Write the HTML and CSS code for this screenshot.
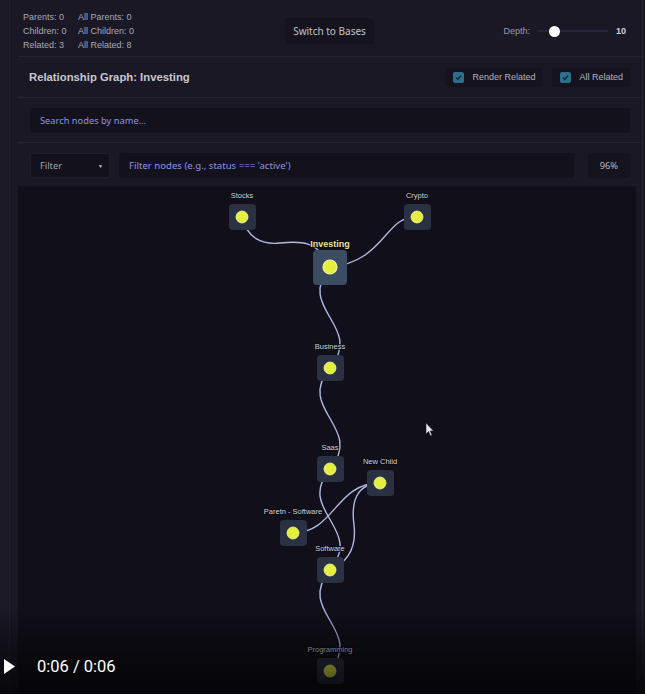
FILE: index.html
```html
<!DOCTYPE html>
<html>
<head>
<meta charset="utf-8">
<link rel="stylesheet" href="styles.css">
</head>
<body>
<div class="app">
  <div class="sidebar"></div>
  <div class="content">
    <div class="topbar">
      <div class="stats">
        <span>Parents: 0</span><span>All Parents: 0</span>
        <span>Children: 0</span><span>All Children: 0</span>
        <span>Related: 3</span><span>All Related: 8</span>
      </div>
      <button class="btn">Switch to Bases</button>
      <div class="depth">
        <span class="depth-label">Depth:</span>
        <div class="slider"><div class="thumb"></div></div>
        <span class="depth-val">10</span>
      </div>
    </div>
    <div class="header">
      <div class="title">Relationship Graph: Investing</div>
      <div class="checks">
        <label class="check"><span class="box"><svg width="11" height="11" viewBox="0 0 11 11"><path d="M3 5.6 L4.8 7.4 L8 3.6" fill="none" stroke="#0f1d26" stroke-width="1.2"/></svg></span>Render Related</label>
        <label class="check"><span class="box"><svg width="11" height="11" viewBox="0 0 11 11"><path d="M3 5.6 L4.8 7.4 L8 3.6" fill="none" stroke="#0f1d26" stroke-width="1.2"/></svg></span>All Related</label>
      </div>
    </div>
    <div class="search-row">
      <div class="input search">Search nodes by name...</div>
    </div>
    <div class="filter-row">
      <div class="select">Filter<span class="caret">▼</span></div>
      <div class="input filter">Filter nodes (e.g., status === 'active')</div>
      <div class="pct">96%</div>
    </div>
    <div class="canvas">
      <svg class="graph" width="618" height="508" viewBox="18 186 618 508">
        <g class="edges" fill="none" stroke="#b0b9e4" stroke-width="1.4">
          <path d="M242,217 C247,238 262,245 280,243 C300,241 318,240 330,267"/>
          <path d="M417,217 C385,215 385,262 330,267"/>
          <path d="M330,267 C295,309 365,326 330,368"/>
          <path d="M330,368 C295,410 365,427 330,469"/>
          <path d="M330,469 C295,511 365,528 330,570"/>
          <path d="M330,570 C295,612 365,629 330,671"/>
          <path d="M293,533 C335,533 335,483 380,483"/>
          <path d="M380,483 C356,484 351,502 354,525 C357,550 346,563 330,570"/>
        </g>
        <g class="nodes">
          <rect class="nbox" x="229" y="204" width="27" height="26" rx="4"/>
          <circle class="dot" cx="242" cy="217" r="6"/>
          <text class="lbl" x="242" y="198">Stocks</text>

          <rect class="nbox" x="404" y="204" width="27" height="26" rx="4"/>
          <circle class="dot" cx="417" cy="217" r="6"/>
          <text class="lbl" x="417" y="198">Crypto</text>

          <rect class="nbox main" x="313" y="250" width="34" height="35" rx="4"/>
          <circle class="dot big" cx="330" cy="267" r="7"/>
          <text class="lbl main-lbl" x="330" y="247">Investing</text>

          <rect class="nbox" x="317" y="355" width="27" height="26" rx="4"/>
          <circle class="dot" cx="330" cy="368" r="6"/>
          <text class="lbl" x="330" y="349">Business</text>

          <rect class="nbox" x="317" y="456" width="27" height="26" rx="4"/>
          <circle class="dot" cx="330" cy="469" r="6"/>
          <text class="lbl" x="330" y="450">Saas</text>

          <rect class="nbox" x="367" y="470" width="27" height="26" rx="4"/>
          <circle class="dot" cx="380" cy="483" r="6"/>
          <text class="lbl" x="380" y="464">New Child</text>

          <rect class="nbox" x="280" y="520" width="27" height="26" rx="4"/>
          <circle class="dot" cx="293" cy="533" r="6"/>
          <text class="lbl" x="293" y="514">Paretn - Software</text>

          <rect class="nbox" x="317" y="557" width="27" height="26" rx="4"/>
          <circle class="dot" cx="330" cy="570" r="6"/>
          <text class="lbl" x="330" y="551">Software</text>

          <rect class="nbox" x="317" y="658" width="27" height="26" rx="4"/>
          <circle class="dot" cx="330" cy="671" r="6"/>
          <text class="lbl" x="330" y="652">Programming</text>
        </g>
        <path class="cursor" d="M426,423 L426,434 L428.5,431.5 L430.5,436 L432,435.3 L430.2,431 L433.5,431 Z"/>
      </svg>
    </div>
  </div>
</div>
<div class="video-bar">
  <svg class="play" width="12" height="15" viewBox="0 0 12 15"><path d="M0,0 L11,7.5 L0,15 Z" fill="#fff"/></svg>
  <span class="time">0:06 / 0:06</span>
</div>
</body>
</html>
```
FILE: styles.css
```css
html, body {
  margin: 0;
  padding: 0;
}
body {
  background: #1a1825;
  width: 645px;
  height: 694px;
  overflow: hidden;
  position: relative;
  font-family: "Liberation Sans", Arial, sans-serif;
}
.app {
  display: flex;
  height: 694px;
}
.sidebar {
  width: 9px;
  border-right: 1px solid #23212f;
  background: #1b1926;
  flex: none;
}
.content {
  margin-left: 8px;
  width: 624px;
  border-right: 1px solid #24222f;
  display: flex;
  flex-direction: column;
  flex: none;
}
.topbar {
  height: 50px;
  padding: 6px 16px 0 5px;
  border-bottom: 1px solid #252333;
  display: grid;
  grid-template-columns: 1fr auto 1fr;
  align-items: center;
}
.stats {
  display: grid;
  grid-template-columns: 55px auto;
  font-size: 9px;
  line-height: 14px;
  color: #a9a9b5;
}
.btn {
  background: #15131e;
  border: none;
  border-radius: 3px;
  color: #c2c2cc;
  font-family: "Noto Sans", sans-serif;
  font-size: 10px;
  height: 26px;
  width: 89px;
  padding: 0;
  margin-left: 10px;
}
.depth {
  justify-self: end;
  display: flex;
  align-items: center;
}
.depth-label {
  font-size: 9px;
  color: #9b9ba7;
  margin-right: 8px;
}
.slider {
  width: 70px;
  height: 2px;
  background: #272535;
  position: relative;
  margin-right: 8px;
}
.thumb {
  position: absolute;
  width: 11px;
  height: 11px;
  border-radius: 50%;
  background: #fff;
  left: 11px;
  top: -4.5px;
}
.depth-val {
  font-size: 9px;
  font-weight: bold;
  color: #d2d2da;
}
.header {
  height: 40px;
  border-bottom: 1px solid #252333;
  display: flex;
  align-items: center;
  justify-content: space-between;
  padding: 0 12px 0 11px;
}
.title {
  font-size: 11.3px;
  font-weight: bold;
  color: #c6c6ce;
}
.checks {
  display: flex;
  gap: 10px;
}
.check {
  display: flex;
  align-items: center;
  height: 19px;
  background: #15131e;
  border-radius: 3px;
  padding: 0 7px 0 8px;
  font-size: 9px;
  color: #b2b2be;
}
.box {
  width: 11px;
  height: 11px;
  background: #2c6f8b;
  border-radius: 2px;
  margin-right: 8px;
  display: block;
}
.box svg {
  display: block;
}
.search-row {
  padding: 10px 12px 9px;
  border-bottom: 1px solid #252333;
}
.input {
  background: #13111c;
  border-radius: 3px;
  height: 25px;
  display: flex;
  align-items: center;
  font-family: "Noto Sans", sans-serif;
  font-size: 9.3px;
  color: #8d92e2;
  padding-left: 10px;
  box-sizing: border-box;
}
.filter-row {
  padding: 10px 12px 8px;
  display: flex;
  align-items: center;
}
.select {
  width: 80px;
  height: 25px;
  box-sizing: border-box;
  background: #13111c;
  border: 1px solid #1f1d2a;
  border-radius: 3px;
  display: flex;
  align-items: center;
  justify-content: space-between;
  padding: 0 6px 0 9px;
  font-family: "Noto Sans", sans-serif;
  font-size: 9.3px;
  color: #a2a2ad;
}
.caret {
  font-size: 5px;
  color: #c8c8d0;
}
.filter {
  width: 455px;
  margin-left: 9px;
  font-size: 9.6px;
}
.pct {
  margin-left: auto;
  width: 42px;
  height: 25px;
  background: #15131e;
  border-radius: 3px;
  display: flex;
  align-items: center;
  justify-content: flex-end;
  padding-right: 12px;
  box-sizing: border-box;
  font-family: "Noto Sans", sans-serif;
  font-size: 9.3px;
  color: #b6b6c0;
}
.canvas {
  width: 618px;
  flex: 1;
  background: #110f19;
}
.graph {
  display: block;
}
.nbox {
  fill: #2a3142;
}
.nbox.main {
  fill: #3c4c63;
}
.dot {
  fill: #e4ef3e;
  stroke: #f2f7a6;
  stroke-width: 0.8;
}
.dot.big {
  stroke-width: 1.2;
}
.lbl {
  font-family: "Liberation Sans", Arial, sans-serif;
  font-size: 7.5px;
  fill: #d2d2da;
  text-anchor: middle;
  paint-order: stroke;
  stroke: #0b0a10;
  stroke-width: 1.5px;
}
.main-lbl {
  font-size: 9px;
  font-weight: bold;
  fill: #ebe0a2;
}
.cursor {
  fill: #e8e8ee;
  stroke: #222;
  stroke-width: 0.6;
}
.video-bar {
  position: absolute;
  left: 0;
  right: 0;
  bottom: 0;
  height: 90px;
  background: linear-gradient(to bottom, rgba(0,0,0,0) 0%, rgba(0,0,0,0.45) 55%, rgba(0,0,0,0.72) 100%);
  display: flex;
  align-items: center;
  padding: 34px 0 0 4px;
  box-sizing: border-box;
}
.play {
  display: block;
  margin-right: 21px;
}
.time {
  font-family: "Roboto", "Liberation Sans", sans-serif;
  font-size: 16.5px;
  color: #ffffff;
}
```
